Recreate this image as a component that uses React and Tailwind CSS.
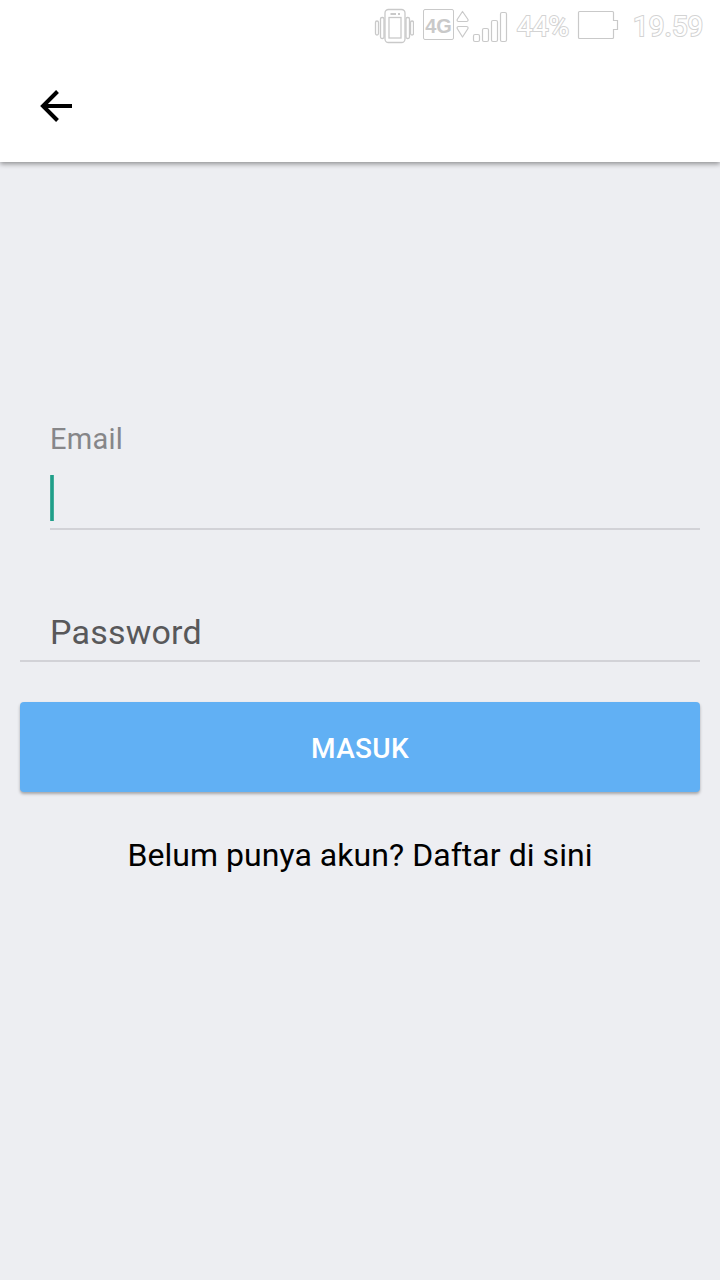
function VibrateIcon() {
  return (
    <svg className="mt-[8px] shrink-0" width="40" height="36" viewBox="374 8 40 36" fill="none" stroke="#c9c9c9" strokeWidth="1.3">
      <rect x="375.5" y="21" width="3" height="14" rx="1.5" />
      <rect x="380.5" y="17.5" width="3.5" height="21" rx="1.5" />
      <rect x="385" y="9.5" width="20" height="33" rx="3.5" />
      <rect x="389" y="17.5" width="12" height="20.5" />
      <path d="M390.5 14h5.5M398 14h2" strokeWidth="2" />
      <rect x="406" y="17.5" width="3.5" height="21" rx="1.5" />
      <rect x="410.5" y="21" width="3" height="14" rx="1.5" />
    </svg>
  );
}

function DataArrows() {
  return (
    <svg className="ml-[2px] mt-[9px] shrink-0" width="14" height="30" viewBox="456 9 14 30" fill="none" stroke="#c9c9c9" strokeWidth="1.2" strokeLinejoin="round">
      <path d="M462.5 11.5 L468 19.5 Q468.3 21.5 466.5 21.5 H458.5 Q456.8 21.5 457.2 19.5 Z" />
      <path d="M462.5 37 L457.2 28.5 Q456.8 26.5 458.5 26.5 H466.5 Q468.3 26.5 468 28.5 Z" />
    </svg>
  );
}

function SignalBars() {
  return (
    <svg className="ml-[2px] mt-[11px] shrink-0" width="36" height="32" viewBox="472 11 36 32" fill="none" stroke="#c9c9c9" strokeWidth="1.2">
      <rect x="473.5" y="34.5" width="6" height="7" rx="1.5" />
      <rect x="482.5" y="28.5" width="6" height="13" rx="1.5" />
      <rect x="491.5" y="20.5" width="6" height="21" rx="1.5" />
      <rect x="500.5" y="12.5" width="6" height="29" rx="1.5" />
    </svg>
  );
}

function BatteryIcon() {
  return (
    <svg className="mt-[10px] shrink-0" width="42" height="30" viewBox="577 10 42 30" fill="none" stroke="#c9c9c9" strokeWidth="1.2">
      <path d="M579.5 11.5H612.5Q613.5 11.5 613.5 12.5V20.5H617.5V29.5H613.5V37.5Q613.5 38.5 612.5 38.5H579.5Q578.5 38.5 578.5 37.5V12.5Q578.5 11.5 579.5 11.5Z" />
    </svg>
  );
}

function StatusBar() {
  return (
    <div className="flex h-[50px] items-start pl-[374px] text-white">
      <VibrateIcon />
      <div className="ml-[9px] mt-[9px] flex h-[31px] w-[31px] items-center justify-center rounded-[2px] border border-[#c9c9c9] pt-[2px] font-['Liberation_Sans',sans-serif] text-[20px] font-bold leading-none text-[#c9c9c9]">
        4G
      </div>
      <DataArrows />
      <SignalBars />
      <span className="ml-[9px] mt-[10px] w-[60px] whitespace-nowrap text-[28px] leading-[34px] [-webkit-text-stroke:2px_#d3d3d3] [paint-order:stroke_fill]">44%</span>
      <BatteryIcon />
      <span className="ml-[14px] mt-[10px] whitespace-nowrap text-[28px] leading-[34px] [-webkit-text-stroke:2px_#d3d3d3] [paint-order:stroke_fill]">19.59</span>
    </div>
  );
}

export default function App() {
  return (
    <div className="flex min-h-[1280px] w-[720px] flex-col bg-[#edeef2] font-[Roboto,sans-serif]">
      <header className="h-[162px] bg-white shadow-[0_2px_5px_rgba(0,0,0,0.4)]">
        <StatusBar />
        <div className="flex h-[112px] items-center pl-[38px]">
          <svg width="36" height="36" viewBox="38 88 36 36" fill="none" stroke="#000" strokeWidth="4">
            <path d="M72 106H43M57.5 91.5L43 106L57.5 120.5" />
          </svg>
        </div>
      </header>
      <main className="flex flex-col px-5 pt-[257px]">
        <div className="ml-[30px] flex h-[111px] flex-col border-b-2 border-[#d2d2d7]">
          <label className="text-[29px] leading-[40px] tracking-[0.25px] text-[#868689]">Email</label>
          <div className="mt-[16px] h-[46px] w-[4px] bg-linear-to-r from-[#4eb5a3] via-[#009681] to-[#4eb5a3]" />
        </div>
        <div className="mt-[80px] flex h-[52px] flex-col border-b-2 border-[#d2d2d7] pl-[30px]">
          <label className="text-[34px] leading-[44px] tracking-[0.22px] text-[#58585a]">Password</label>
        </div>
        <button className="mt-[40px] h-[90px] rounded-[4px] bg-[#61b0f4] pt-[3px] text-[28px] font-medium tracking-[0.3px] text-white shadow-[0_2px_3px_rgba(0,0,0,0.3)]">MASUK</button>
        <p className="mt-[43px] text-center text-[32px] leading-[40px] tracking-[0.05px] text-black">Belum punya akun? Daftar di sini</p>
      </main>
    </div>
  );
}
